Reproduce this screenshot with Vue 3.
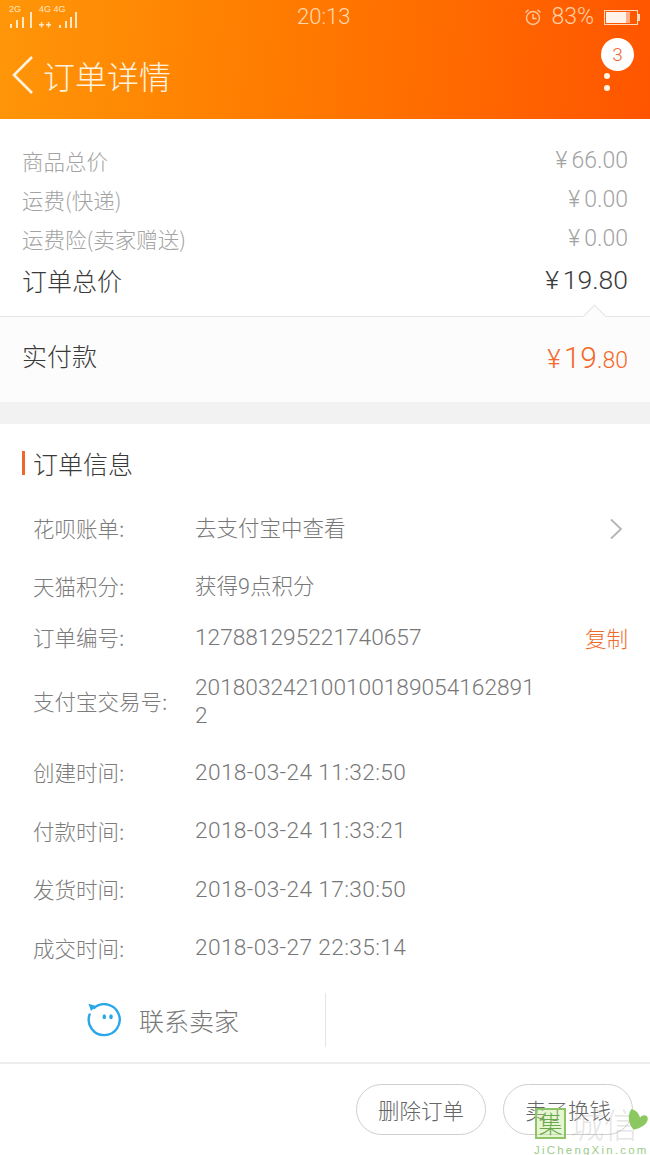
<script setup>
const prices = [
  { label: '商品总价', value: '66.00' },
  { label: '运费(快递)', value: '0.00' },
  { label: '运费险(卖家赠送)', value: '0.00' }
]
const infoRows = [
  { label: '花呗账单:', value: '去支付宝中查看', h: 65, arrow: true, kind: 'cjk' },
  { label: '天猫积分:', value: '获得9点积分', h: 51, kind: 'cjk' },
  { label: '订单编号:', value: '127881295221740657', h: 51, copy: true },
  { label: '支付宝交易号:', value: '2018032421001001890541628912', h: 77, kind: 'wrap' },
  { label: '创建时间:', value: '2018-03-24 11:32:50', h: 59, mt: 3, kind: 'date' },
  { label: '付款时间:', value: '2018-03-24 11:33:21', h: 58, kind: 'date' },
  { label: '发货时间:', value: '2018-03-24 17:30:50', h: 59, kind: 'date' },
  { label: '成交时间:', value: '2018-03-27 22:35:14', h: 58, kind: 'date' }
]
</script>

<template>
  <div class="page">
    <header class="top">
      <div class="status">
        <div class="signal">
          <div class="sim">
            <span class="tag">2G</span>
            <svg width="24" height="16" viewBox="0 0 24 16"><g fill="#ffe6c4"><rect x="1" y="12" width="2" height="4"/><rect x="7" y="8" width="2" height="8"/><rect x="13" y="5" width="2" height="11"/><rect x="21" y="0" width="2" height="16"/></g></svg>
          </div>
          <div class="sim second">
            <span class="tag">4G 4G</span>
            <svg width="38" height="16" viewBox="0 0 38 16"><g fill="#ffe6c4"><path d="M0 12h5v1.500H0zM1.800 10h1.500v5.500H1.800zM7 12h5v1.500H7zM8.800 10h1.500v5.500H8.800z"/><rect x="20" y="13" width="2" height="3"/><rect x="26" y="9" width="2" height="7"/><rect x="31" y="5" width="2" height="11"/><rect x="36" y="0" width="2" height="16"/></g></svg>
          </div>
        </div>
        <span class="clock">20:13</span>
        <div class="right-status">
          <svg class="alarm" width="18" height="18" viewBox="0 0 18 18" fill="none" stroke="#ffc999" stroke-width="1.400"><circle cx="9" cy="10" r="6.500"/><path d="M9 6v4.500h3.500M1.500 4.500 4.500 1.800M16.500 4.500 13.500 1.800"/></svg>
          <span class="pct">83%</span>
          <div class="battery"><div class="fill"></div></div>
          <div class="nub"></div>
        </div>
      </div>
      <div class="nav">
        <svg class="back" width="24" height="40" viewBox="0 0 24 40" fill="none" stroke="#fff3e0" stroke-width="2.600"><path d="M21 2 3 20l18 18"/></svg>
        <h1>订单详情</h1>
        <div class="more">
          <span class="badge">3</span>
          <i></i><i></i>
        </div>
      </div>
    </header>

    <section class="prices">
      <div v-for="p in prices" :key="p.label" class="price-row">
        <span>{{ p.label }}</span>
        <span class="amount"><em>¥</em>{{ p.value }}</span>
      </div>
      <div class="total-row">
        <span>订单总价</span>
        <span class="amount"><em>¥</em>19.80</span>
      </div>
    </section>

    <section class="paid">
      <span class="caret"></span>
      <span class="paid-label">实付款</span>
      <span class="paid-value"><em>¥</em><b>19</b><small>.80</small></span>
    </section>

    <div class="gap"></div>

    <section class="info">
      <h2>订单信息</h2>
      <div v-for="r in infoRows" :key="r.label" class="info-row" :style="{ height: r.h + 'px', marginTop: (r.mt || 0) + 'px' }">
        <span class="lbl">{{ r.label }}</span>
        <span class="val" :class="r.kind">{{ r.value }}</span>
        <svg v-if="r.arrow" class="chev" width="14" height="22" viewBox="0 0 14 22" fill="none" stroke="#b5b5b5" stroke-width="1.800"><path d="M2 1.500 12 11 2 20.500"/></svg>
        <span v-if="r.copy" class="copy">复制</span>
      </div>
    </section>

    <section class="contact">
      <div class="contact-btn">
        <svg width="36" height="36" viewBox="0 0 36 36" fill="none"><path d="M8 5A15.500 15.500 0 1 1 3.600 11.500" stroke="#29a7e6" stroke-width="2.400" stroke-linecap="round"/><path d="M2.500 .8 10 3 5 8z" fill="#29a7e6"/><ellipse cx="18.300" cy="13.700" rx="1.800" ry="2.500" fill="#29a7e6"/><ellipse cx="25" cy="13.700" rx="1.800" ry="2.500" fill="#29a7e6"/></svg>
        <span class="contact-text">联系卖家</span>
      </div>
      <div class="divider"></div>
    </section>

    <footer class="actions">
      <button>删除订单</button>
      <button>卖了换钱</button>
    </footer>

    <div class="mark">
      <span class="mark-box">集</span>
      <span class="mark-name">城信</span>
      <svg class="leaf" width="22" height="26" viewBox="0 0 20 24"><path d="M3 1c-4 6-3 13 2 19 7-1 14-6 13-11-1-3-5-3-7 0C10 5 7 2 3 1z" fill="#8cc860"/></svg>
      <span class="mark-url">JiChengXin.com</span>
    </div>
  </div>
</template>

<style>
html, body { margin: 0; background: #fff; }
</style>

<style scoped>
.page {
  position: relative;
  width: 650px;
  height: 1155px;
  overflow: hidden;
  background: #fff;
  font-family: "Noto Sans CJK SC", "Liberation Sans", sans-serif;
  font-weight: 300;
  color: #888;
}
.top {
  height: 119px;
  background: linear-gradient(95deg, #ff9608 0%, #ff7a00 45%, #ff5500 100%);
  color: #fff;
}
.status {
  position: relative;
  height: 34px;
  display: flex;
  align-items: center;
  justify-content: space-between;
  padding: 0 9px;
}
.signal { display: flex; gap: 6px; height: 24px; margin-top: -3px; }
.sim { position: relative; display: flex; align-items: flex-end; }
.tag {
  position: absolute;
  top: 0;
  left: 0;
  font: 9px/10px "Liberation Sans", sans-serif;
  color: #ffe6c4;
  white-space: nowrap;
}
.clock {
  position: absolute;
  left: 297px;
  top: 3px;
  font: 300 22px/28px Roboto, sans-serif;
  color: #ffd9b3;
}
.right-status { display: flex; align-items: center; margin-right: 1px; }
.alarm { margin-right: 9px; }
.pct { font: 300 23px/28px Roboto, sans-serif; color: #ffd0a6; margin-right: 10px; }
.battery {
  width: 30px;
  height: 11px;
  border: 1px solid #ffd9bd;
  padding: 1px;
  box-sizing: content-box;
}
.fill { width: 24px; height: 11px; background: linear-gradient(90deg, #fff3ea 82%, #ffb08a 82%); }
.nub { width: 2px; height: 7px; background: #ffd9bd; }
.nav { position: relative; height: 85px; display: flex; align-items: center; padding-left: 11px; }
.back { margin-top: -4px; }
h1 {
  margin: -4px 0 0 8px;
  font-size: 32px;
  font-weight: 300;
  line-height: 40px;
  color: #fff3e0;
}
.more { position: absolute; right: 33px; top: 0; width: 20px; height: 85px; }
.more i {
  position: absolute;
  left: 7px;
  width: 6px;
  height: 6px;
  border-radius: 50%;
  background: #fff3e6;
}
.more i:nth-of-type(1) { top: 39px; }
.more i:nth-of-type(2) { top: 51px; }
.badge {
  position: absolute;
  left: 4px;
  top: 4px;
  width: 33px;
  height: 33px;
  border-radius: 50%;
  background: #fff;
  color: #f0672e;
  font: 300 19px/33px Roboto, sans-serif;
  text-align: center;
}
.prices { padding: 22px 22px 0; height: 197px; box-sizing: border-box; }
.price-row {
  height: 39px;
  display: flex;
  align-items: center;
  justify-content: space-between;
  font-size: 21.500px;
  color: #a3a3a3;
}
.total-row {
  height: 41px;
  margin-top: 1px;
  display: flex;
  align-items: center;
  justify-content: space-between;
  font-size: 25px;
  color: #3a3a3a;
}
.amount { font-family: Roboto, sans-serif; font-weight: 300; }
.price-row .amount { font-size: 23px; color: #a3a3a3; }
.total-row .amount { font-size: 26.500px; color: #3a3a3a; }
em { font-style: normal; margin-right: 4px; }
.paid {
  position: relative;
  height: 85px;
  border-top: 1px solid #e4e4e4;
  background: #fcfcfc;
  display: flex;
  align-items: center;
  justify-content: space-between;
  padding: 0 22px;
}
.caret {
  position: absolute;
  right: 47px;
  top: -9px;
  width: 16px;
  height: 16px;
  background: #fcfcfc;
  border-top: 1px solid #e4e4e4;
  border-left: 1px solid #e4e4e4;
  transform: rotate(45deg);
}
.paid-label { font-size: 25px; color: #3a3a3a; margin-bottom: 9px; }
.paid-value { font-family: Roboto, sans-serif; color: #f4692a; font-weight: 300; display: flex; align-items: baseline; margin-bottom: 5px; }
.paid-value em { font-size: 26px; margin-right: 3px; }
.paid-value b { font-size: 30px; font-weight: 300; }
.paid-value small { font-size: 23px; }
.gap { height: 22px; background: #f2f2f2; }
.info { padding-top: 18px; }
h2 {
  position: relative;
  margin: 0 0 12px 33px;
  font-size: 25px;
  font-weight: 300;
  line-height: 42px;
  color: #3a3a3a;
}
h2::before {
  content: "";
  position: absolute;
  left: -11px;
  top: 9px;
  width: 3px;
  height: 24px;
  background: #f0672e;
}
.info-row {
  display: flex;
  align-items: center;
  padding: 0 22px 0 33px;
  font-size: 21.500px;
  color: #7c7c7c;
}
.lbl { width: 162px; flex: none; white-space: nowrap; margin-top: -2px; }
.val { font-family: Roboto, "Noto Sans CJK SC", sans-serif; font-size: 22.700px; line-height: 28px; color: #777; }
.val.cjk { font-size: 21.500px; }
.val.date { letter-spacing: 0.370px; }
.val.wrap { width: 342px; word-break: break-all; }
.chev { margin: 0 5px 0 auto; }
.copy { margin-left: auto; color: #ee6a2c; }
.contact {
  height: 83px;
  margin-top: 4px;
  display: flex;
  align-items: flex-start;
  border-bottom: 2px solid #ededed;
  box-sizing: border-box;
  padding-top: 12px;
}
.contact-btn {
  width: 325px;
  padding-left: 86px;
  box-sizing: border-box;
  display: flex;
  align-items: center;
  gap: 17px;
  height: 56px;
  font-size: 25px;
  color: #777;
}
.contact-text { margin-top: -3px; }
.divider { width: 1px; height: 54px; background: #e4e4e4; }
.actions { display: flex; justify-content: flex-end; gap: 17px; padding: 20px 17px 0 0; }
button {
  width: 130px;
  height: 51px;
  border: 1px solid #cfcfcf;
  border-radius: 26px;
  background: #fff;
  font: 300 21.500px "Noto Sans CJK SC", sans-serif;
  color: #666;
  padding: 0;
}
.mark { position: absolute; left: 534px; top: 1108px; width: 116px; height: 47px; }
.mark-box {
  position: absolute;
  left: 1px;
  top: 0;
  width: 27px;
  height: 27px;
  border: 2px solid #8fc36a;
  background: rgba(190, 232, 140, 0.4);
  color: #6aa84f;
  font-size: 24px;
  line-height: 26px;
  text-align: center;
}
.mark-name {
  position: absolute;
  left: 36px;
  top: -3px;
  font-size: 34px;
  line-height: 38px;
  color: rgba(190, 190, 190, 0.4);
}
.leaf { position: absolute; left: 94px; top: 0; }
.mark-url {
  position: absolute;
  left: 0;
  top: 35px;
  font: 400 11.500px/14px "Liberation Sans", sans-serif;
  letter-spacing: 2.200px;
  color: #9ccb8a;
  white-space: nowrap;
}
</style>
